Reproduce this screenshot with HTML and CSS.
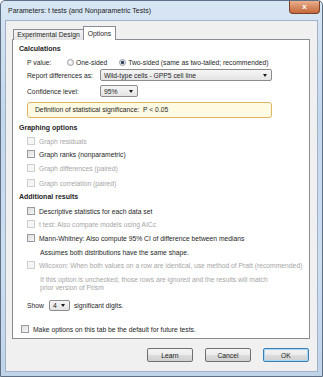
FILE: index.html
```html
<!DOCTYPE html>
<html lang="en">
<head>
    <link rel="stylesheet" href="styles.css">
    <title>Parameters: t tests</title>
</head>
<body>
    <div class="window">
        <div class="titlebar">
            <span class="title">Parameters: t tests (and Nonparametric Tests)</span>
            <span class="close">x</span>
        </div>
        <div class="client">
            <div class="tabs">
                <div class="tab">Experimental Design</div>
                <div class="tab active">Options</div>
            </div>
            <div class="panel">
                <div class="heading mt3">Calculations</div>
                <div class="row indent mt1">
                    <span class="label short">P value:</span>
                    <span class="radio"></span><span class="opt">One-sided</span>
                    <span class="radio checked"></span><span>Two-sided (same as two-tailed; recommended)</span>
                </div>
                <div class="row indent mt1">
                    <span class="label">Report differences as:</span>
                    <span class="select wide"><span>Wild-type cells - GPP5 cell line</span><i class="arrow"></i></span>
                </div>
                <div class="row indent mt4">
                    <span class="label">Confidence level:</span>
                    <span class="select level"><span>95%</span><i class="arrow"></i></span>
                </div>
                <div class="note-box indent mt5">Definition of statistical significance:&nbsp; P &lt; 0.05</div>

                <div class="heading mt4">Graphing options</div>
                <div class="row indent mt1 off"><span class="check"></span>Graph residuals</div>
                <div class="row indent mt1"><span class="check"></span>Graph ranks (nonparametric)</div>
                <div class="row indent mt2 off"><span class="check"></span>Graph differences (paired)</div>
                <div class="row indent mt3 off"><span class="check"></span>Graph correlation (paired)</div>

                <div class="heading mt2">Additional results</div>
                <div class="row indent mt2"><span class="check"></span>Descriptive statistics for each data set</div>
                <div class="row indent mt1 off"><span class="check"></span>t test: Also compare models using AICc</div>
                <div class="row indent mt2"><span class="check"></span>Mann-Whitney: Also compute 95% CI of difference between medians</div>
                <div class="row sub mt2">Assumes both distributions have the same shape.</div>
                <div class="row indent mt1 off"><span class="check"></span>Wilcoxon: When both values on a row are identical, use method of Pratt (recommended)</div>
                <div class="hint sub mt5">If this option is unchecked, those rows are ignored and the results will match<br>prior version of Prism</div>

                <div class="row indent mt7">
                    Show
                    <span class="select digits"><span>4</span><i class="arrow"></i></span>
                    significant digits.
                </div>
                <div class="row default mt12"><span class="check"></span>Make options on this tab be the default for future tests.</div>
            </div>
            <div class="buttons">
                <button class="btn">Learn</button>
                <button class="btn">Cancel</button>
                <button class="btn primary">OK</button>
            </div>
        </div>
    </div>
</body>
</html>
```

FILE: styles.css
```css
* {
    margin: 0;
    padding: 0;
    box-sizing: border-box;
}

body {
    font-family: "Liberation Sans", Arial, sans-serif;
    font-size: 6.75px;
    color: #262626;
    background: #ffffff;
}

.window {
    width: 323px;
    height: 377px;
    border: 1px solid #5f6f84;
    border-radius: 5px 5px 0 0;
    background: linear-gradient(#d8e6f4, #c3d7ec 30%, #cddef0 70%, #bfd3e9);
    display: flex;
    flex-direction: column;
}

.titlebar {
    height: 19px;
    display: flex;
    align-items: flex-start;
    padding-left: 7px;
}

.title {
    font-size: 7px;
    line-height: 8px;
    margin-top: 6px;
    color: #1b1b1b;
}

.close {
    margin-left: auto;
    margin-right: 2px;
    width: 31px;
    height: 13px;
    border: 1px solid #7a4028;
    border-top: none;
    border-radius: 0 0 4px 4px;
    background: linear-gradient(#e9b08e, #d68a60 50%, #c66a3c);
    color: #ffffff;
    font-weight: bold;
    font-size: 8px;
    line-height: 11px;
    text-align: center;
}

.client {
    flex: 1;
    margin: 0 4px 4px 4px;
    border: 1px solid #9fb2c8;
    background: #f0f0f0;
    padding: 5px 7px 0 6px;
}

.tabs {
    display: flex;
    align-items: flex-end;
    margin-bottom: -1px;
    position: relative;
    z-index: 1;
}

.tab {
    height: 11px;
    width: 71px;
    margin-left: 1px;
    border: 1px solid #898c95;
    border-bottom: none;
    background: linear-gradient(#f5f5f5, #e3e3e3);
    line-height: 10px;
    text-align: center;
}

.tab.active {
    height: 14px;
    width: 33px;
    margin-left: -1px;
    background: #ffffff;
    line-height: 13px;
}

.panel {
    height: 300px;
    border: 1px solid #898c95;
    background: #ffffff;
    padding-left: 6px;
    display: flex;
    flex-direction: column;
}

.heading {
    height: 12px;
    line-height: 12px;
    font-weight: bold;
    font-size: 7px;
}

.row {
    height: 12px;
    display: flex;
    align-items: center;
    white-space: nowrap;
}

.indent {
    margin-left: 8px;
}

.sub {
    margin-left: 21px;
}

.default {
    margin-left: 2px;
}

.off {
    color: #a6a6a6;
}

.mt1 { margin-top: 1px; }
.mt2 { margin-top: 2px; }
.mt3 { margin-top: 3px; }
.mt4 { margin-top: 4px; }
.mt5 { margin-top: 5px; }
.mt7 { margin-top: 7px; }
.mt12 { margin-top: 12px; }

.label {
    width: 73px;
}

.label.short {
    width: 40px;
}

.opt {
    margin-right: 12px;
}

.radio {
    width: 7px;
    height: 7px;
    border: 1px solid #9a9ca0;
    border-radius: 50%;
    background: radial-gradient(circle at 40% 40%, #ffffff, #d8dadd);
    margin-right: 2px;
}

.radio.checked {
    background: radial-gradient(circle, #22364e 0, #2f4865 1.3px, #dfe2e6 1.9px);
}

.check {
    width: 8px;
    height: 8px;
    border: 1px solid #9a9b9e;
    background: linear-gradient(135deg, #dcdddf, #f7f7f7);
    margin-right: 4px;
}

.off .check {
    border-color: #cdced0;
    background: #f6f6f6;
}

.select {
    height: 12px;
    border: 1px solid #8c8c8c;
    border-radius: 2px;
    background: linear-gradient(#f6f6f6, #e4e4e4);
    display: flex;
    align-items: center;
    padding-left: 3px;
}

.select.wide {
    width: 172px;
}

.select.level {
    width: 38px;
}

.select.digits {
    width: 21px;
    height: 11px;
    margin: 0 4px 0 5px;
}

.arrow {
    margin-left: auto;
    margin-right: 4px;
    border-top: 3px solid #1a1a1a;
    border-left: 2.5px solid transparent;
    border-right: 2.5px solid transparent;
}

.note-box {
    width: 245px;
    height: 16px;
    border: 1px solid #e0b462;
    border-radius: 3px;
    background: #fffbe3;
    padding-left: 7px;
    line-height: 14px;
}

.hint {
    line-height: 8px;
    color: #a6a6a6;
}

.buttons {
    display: flex;
    justify-content: flex-end;
    gap: 12px;
    margin-top: 9px;
    margin-right: 1px;
}

.btn {
    width: 46px;
    height: 14px;
    border: 1px solid #707070;
    border-radius: 2px;
    background: linear-gradient(#f3f3f3, #ebebeb 50%, #dcdcdc 51%, #d0d0d0);
    font-family: "Liberation Sans", Arial, sans-serif;
    font-size: 6.75px;
    color: #1c1c1c;
}

.btn.primary {
    border-color: #3c7fb1;
    box-shadow: inset 0 0 0 1px #a6d8f4;
}
```
